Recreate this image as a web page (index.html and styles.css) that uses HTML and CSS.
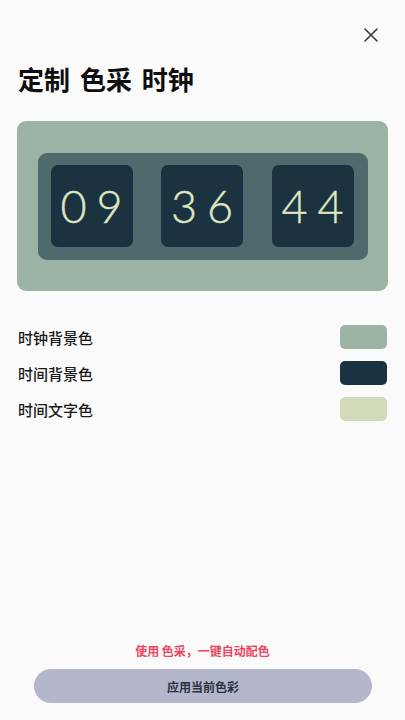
FILE: index.html
```html
<!DOCTYPE html>
<html lang="zh">
<head>
<meta charset="utf-8">
<link rel="stylesheet" href="styles.css">
</head>
<body>
<div class="page">
  <div class="topbar">
    <button class="close" aria-label="close">
      <svg viewBox="0 0 16 16" width="16" height="16"><path d="M2 2 L14 14 M14 2 L2 14" stroke="#3a3a3a" stroke-width="1.6" stroke-linecap="round" fill="none"/></svg>
    </button>
  </div>
  <h1 class="title">定制 色采 时钟</h1>
  <div class="clock">
    <div class="frame">
      <div class="cell">09</div>
      <div class="cell">36</div>
      <div class="cell">44</div>
    </div>
  </div>
  <div class="options">
    <div class="row"><span class="label">时钟背景色</span><span class="swatch sw1"></span></div>
    <div class="row"><span class="label">时间背景色</span><span class="swatch sw2"></span></div>
    <div class="row"><span class="label">时间文字色</span><span class="swatch sw3"></span></div>
  </div>
  <div class="spacer"></div>
  <div class="hint">使用 色采，一键自动配色</div>
  <button class="apply">应用当前色彩</button>
</div>
</body>
</html>
```

FILE: styles.css
```css
* { box-sizing: border-box; }
html, body { margin: 0; padding: 0; }
body {
  background: #fafafa;
  font-family: "Noto Sans CJK SC", "Noto Sans", sans-serif;
  color: #111;
}
.page {
  height: 720px;
  display: flex;
  flex-direction: column;
  padding: 0 17px;
}
.topbar {
  display: flex;
  justify-content: flex-end;
  padding-top: 27px;
  padding-right: 9px;
}
.close {
  border: 0;
  background: none;
  padding: 0;
  width: 16px;
  height: 16px;
  display: block;
}
.close svg { display: block; }
.title {
  margin: 20px 0 0 1px;
  font-size: 26px;
  line-height: 32px;
  font-weight: 700;
  color: #0d0d0d;
  word-spacing: 4px;
}
.clock {
  margin-top: 26px;
  height: 170px;
  background: #9bb3a5;
  border-radius: 9px;
  display: flex;
  align-items: center;
  justify-content: center;
}
.frame {
  width: 330px;
  height: 107px;
  background: #4e6a6c;
  border-radius: 9px;
  display: flex;
  align-items: center;
  justify-content: space-between;
  padding: 0 14px 0 13px;
}
.cell {
  width: 82px;
  height: 82px;
  background: #1b3340;
  border-radius: 7px;
  display: flex;
  align-items: center;
  justify-content: center;
  color: #dfe6c0;
  font-family: "Lato", "Open Sans", sans-serif;
  font-weight: 300;
  font-size: 45px;
  letter-spacing: 10px;
  text-indent: 10px;
  line-height: 1;
  -webkit-text-stroke: 0.4px #dfe6c0;
}
.options {
  margin-top: 34px;
  display: flex;
  flex-direction: column;
  gap: 12px;
}
.row {
  display: flex;
  justify-content: space-between;
  align-items: center;
  height: 24px;
}
.label {
  font-size: 15px;
  font-weight: 500;
  color: #1a1a1a;
  padding-left: 1px;
}
.swatch {
  width: 47px;
  height: 24px;
  border-radius: 5px;
  margin-right: 1px;
}
.sw1 { background: #9bb3a5; }
.sw2 { background: #1a3340; }
.sw3 { background: #d2dcbb; }
.spacer { flex: 1; }
.hint {
  text-align: center;
  font-size: 12px;
  font-weight: 700;
  color: #ec4560;
  line-height: 16px;
  margin-bottom: 10px;
}
.apply {
  margin: 0 0 17px 17px;
  width: 338px;
  height: 34px;
  border: 0;
  border-radius: 17px;
  background: #b4b7cb;
  color: #2b3140;
  font-family: "Noto Sans CJK SC", sans-serif;
  font-size: 12px;
  font-weight: 700;
}
```
